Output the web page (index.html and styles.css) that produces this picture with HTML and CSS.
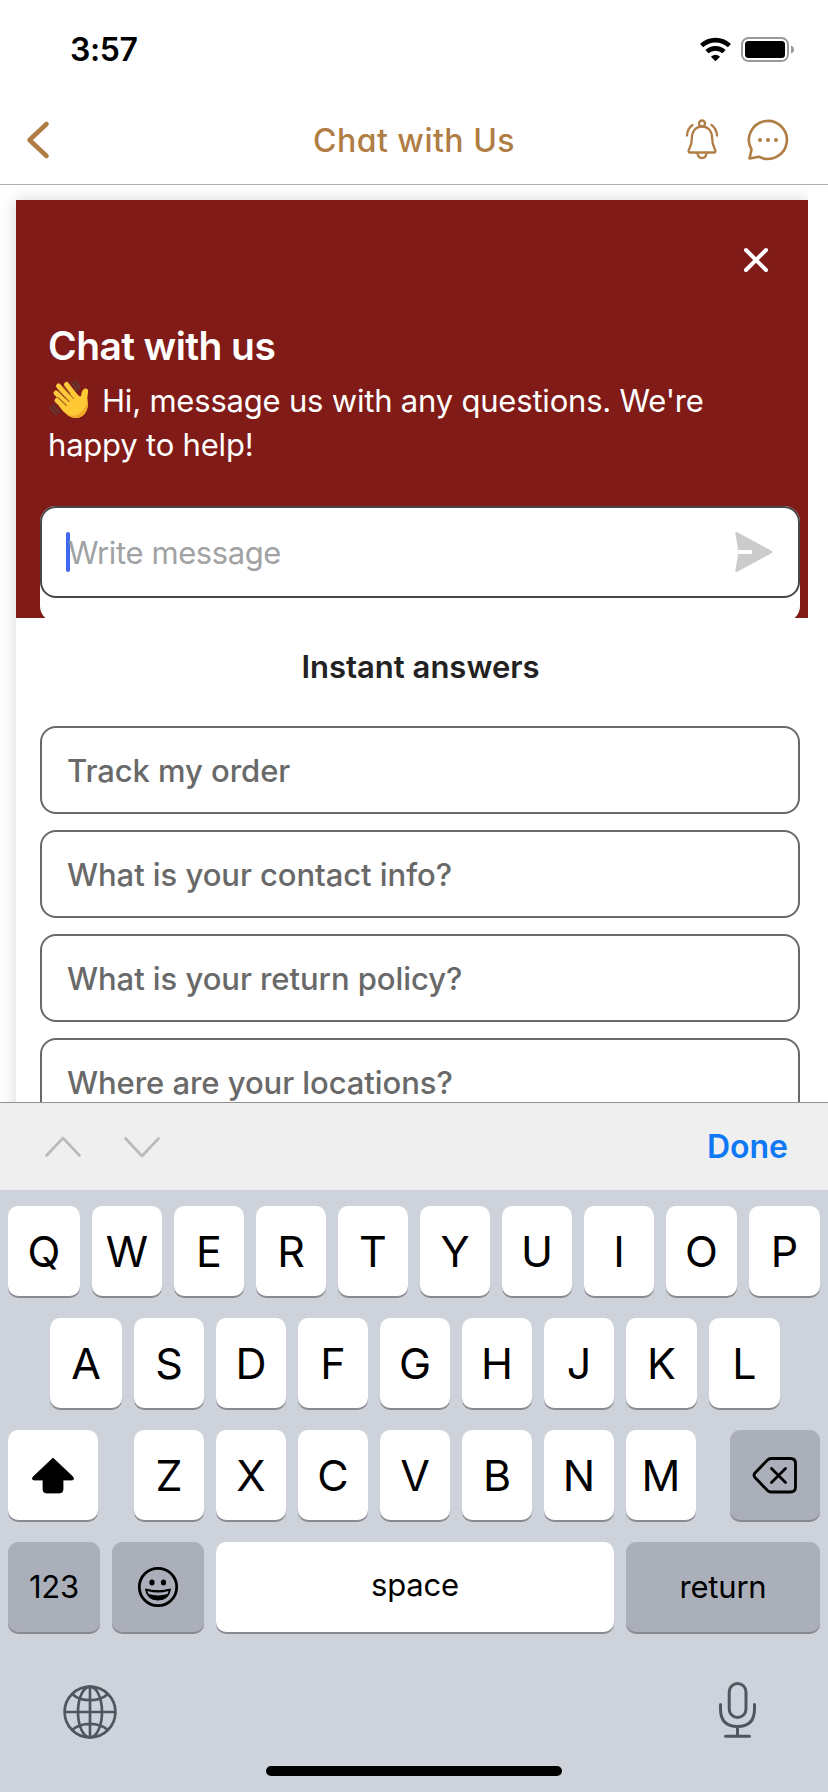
FILE: index.html
```html
<!DOCTYPE html>
<html lang="en">
<head>
<meta charset="utf-8">
<title>Chat with Us</title>
<link rel="stylesheet" href="styles.css">
</head>
<body>
<div class="screen">
  <div class="status">
    <span class="time">3:57</span>
    <svg class="status-icons" width="96" height="28" viewBox="698 36 96 28">
      <g fill="none" stroke="#000" stroke-width="4.6">
        <path d="M701.600 45.600A20.500 20.500 0 0 1 729.400 45.600"/>
        <path d="M707 51.700A12.400 12.400 0 0 1 724 51.700"/>
      </g>
      <path d="M715.500 61.200L710.900 56.700Q715.500 52.600 720.100 56.700Z"/>
      <rect x="742" y="38" width="46" height="23" rx="6.500" fill="none" stroke="#999" stroke-width="2"/>
      <rect x="745" y="41" width="40" height="17" rx="3.500"/>
      <path d="M791 45.500Q794 46.500 794 49.500Q794 52.500 791 53.500Z" fill="#999"/>
    </svg>
  </div>

  <header class="nav">
    <svg class="back" width="28" height="44" viewBox="0 0 28 44"><path d="M22.500 6L5.500 22L22.500 38" /></svg>
    <h1 class="nav-title">Chat with Us</h1>
    <div class="nav-actions">
      <svg width="36" height="44" viewBox="684 119 36 44">
        <g fill="none" stroke="#b07d45" stroke-width="2.300" stroke-linecap="round" stroke-linejoin="round">
          <circle cx="702" cy="124.500" r="3"/>
          <path d="M702 127.500C695.500 127.500 691.800 132.500 691.800 139.500C691.800 147 689.500 148 688.600 151.800Q688.400 153.500 690 153.500H714Q715.600 153.500 715.400 151.800C714.500 148 712.200 147 712.200 139.500C712.200 132.500 708.500 127.500 702 127.500Z"/>
          <path d="M697.500 154.300Q698 159 702 159Q706 159 706.500 154.300"/>
          <path d="M692.500 126Q687.500 129.500 687 136.500M711.500 126Q716.500 129.500 717 136.500"/>
        </g>
      </svg>
      <svg width="44" height="44" viewBox="746 118 44 44">
        <path d="M749.500 158.500L751.500 149.500A19 19 0 1 1 759 156.700Z" fill="none" stroke="#b07d45" stroke-width="2.600" stroke-linejoin="round"/>
        <g fill="#b07d45"><circle cx="760" cy="140" r="2"/><circle cx="768" cy="140" r="2"/><circle cx="776" cy="140" r="2"/></g>
      </svg>
    </div>
  </header>

  <main class="frame">
    <section class="card">
      <div class="hero">
        <div class="hero-top">
          <svg width="28" height="28" viewBox="0 0 28 28"><path d="M4 4L24 24M24 4L4 24" stroke="#fff" stroke-width="4" stroke-linecap="round"/></svg>
        </div>
        <h2 class="hero-title">Chat with us</h2>
        <p class="hero-text"><svg class="wave" width="42" height="42" viewBox="49 380 42 42" role="img" aria-label="waving hand">
          <g fill="none" stroke="#5d3a34" stroke-width="2" stroke-linecap="round">
            <path d="M73 384Q76.500 387 78 391.500M76 382Q79.500 385 80.500 389"/>
            <path d="M54 405.500Q56 410 60.500 413M51.500 408Q53.500 413 57.500 415"/>
          </g>
          <g fill="none" stroke="#ffca3d" stroke-width="5" stroke-linecap="round">
            <path d="M67.500 385.500L78 399M59.500 387L72 401M57 394L68 405M58 401.500L68 411"/>
          </g>
          <path d="M64 403L74 392L80 397Q82.500 398.500 82.500 394Q84 389 87 389.500Q90 390 88.800 394.500Q88 398 88.800 404Q89.300 413 82.500 417.500Q75.500 421 69 416.500Q63 412 60 407Z" fill="#ffc936"/>
          <path d="M64 387.800L74.500 399.500M59.800 392L70 402.500M58.800 398.500L67.500 406.500" stroke="#a9661c" stroke-width="1.100" stroke-linecap="round"/>
          <path d="M68 415.600Q76 418.500 82 413.500Q87 409 88.500 402Q90 412.500 83 417.300Q75.500 421 68 415.600Z" fill="#f3a827"/>
        </svg><span class="line1">Hi, message us with any questions. We're</span><br><span class="line2">happy to help!</span></p>
        <div class="composer">
          <div class="field">
            <span class="caret"></span>
            <span class="placeholder">Write message</span>
            <svg class="send" width="40" height="44" viewBox="734 530 40 44">
              <path d="M736.300 533L771.500 552L736.300 571L739.500 552Z" fill="#cbcbcb" stroke="#cbcbcb" stroke-width="2" stroke-linejoin="round"/>
              <path d="M738.500 552H752" stroke="#fff" stroke-width="4"/>
            </svg>
          </div>
        </div>
      </div>
      <h3 class="faq-title">Instant answers</h3>
      <ul class="faq">
        <li class="q">Track my order</li>
        <li class="q">What is your contact info?</li>
        <li class="q">What is your return policy?</li>
        <li class="q">Where are your locations?</li>
      </ul>
    </section>
  </main>

  <div class="accessory">
    <svg width="116" height="24" viewBox="44 1134 116 24"><path d="M46.500 1154.500L63 1137L79.500 1154.500M125.500 1137.500L142 1155L158.500 1137.500" fill="none" stroke="#bababa" stroke-width="2.600" stroke-linecap="round" stroke-linejoin="round"/></svg>
    <span class="done">Done</span>
  </div>

  <div class="keyboard">
    <div class="row row1">
      <span class="key">Q</span><span class="key">W</span><span class="key">E</span><span class="key">R</span><span class="key">T</span><span class="key">Y</span><span class="key">U</span><span class="key">I</span><span class="key">O</span><span class="key">P</span>
    </div>
    <div class="row row2">
      <span class="key">A</span><span class="key">S</span><span class="key">D</span><span class="key">F</span><span class="key">G</span><span class="key">H</span><span class="key">J</span><span class="key">K</span><span class="key">L</span>
    </div>
    <div class="row row3">
      <span class="key"><svg width="44" height="38" viewBox="0 0 44 38"><path d="M22 2L42 21Q43.500 24 41 24H32V33.500Q32 37 28.500 37H15.500Q12 37 12 33.500V24H3Q.500 24 2 21Z" stroke="#000" stroke-width=".8" stroke-linejoin="round"/></svg></span>
      <div class="letters"><span class="key">Z</span><span class="key">X</span><span class="key">C</span><span class="key">V</span><span class="key">B</span><span class="key">N</span><span class="key">M</span></div>
      <span class="key dark"><svg width="46" height="38" viewBox="0 0 46 38"><path d="M19 2.500H38.500Q43.500 2.500 43.500 7.500V31Q43.500 36 38.500 36H19Q17 36 15.500 34.500L3 21.500Q1 19.200 3 17L15.500 4Q17 2.500 19 2.500ZM19.500 12.500L33.500 26.500M33.500 12.500L19.500 26.500" fill="none" stroke="#000" stroke-width="2.800" stroke-linecap="round" stroke-linejoin="round"/></svg></span>
    </div>
    <div class="row row4">
      <span class="key dark small">123</span>
      <span class="key dark"><svg width="42" height="42" viewBox="0 0 42 42"><circle cx="21" cy="21" r="18.700" fill="none" stroke="#000" stroke-width="2.800"/><ellipse cx="15" cy="16.500" rx="2.600" ry="3"/><ellipse cx="26.500" cy="16.500" rx="2.600" ry="3"/><path d="M8.500 23Q21 26.500 33.500 23Q32 34 21 34Q10 34 8.500 23Z" stroke="#000" stroke-width="1" stroke-linejoin="round"/><path d="M10.500 25Q21 28 31.500 25L30.600 28Q21 30.800 11.400 28Z" fill="#abafba"/></svg></span>
      <span class="key small space">space</span>
      <span class="key dark small return">return</span>
    </div>
    <div class="system">
      <svg class="globe" width="56" height="56" viewBox="-28 -28 56 56"><g fill="none" stroke="#50555e" stroke-width="2.700"><circle r="25.400"/><path d="M0-25.400V25.400M-25.400 0H25.400M-18-18Q-11-11.800 0-11.800Q11-11.800 18-18M-18 18Q-11 11.800 0 11.800Q11 11.800 18 18"/><ellipse rx="12" ry="25.400"/></g></svg>
      <svg width="42" height="60" viewBox="716 1680 42 60"><g fill="none" stroke="#50555e" stroke-width="3" stroke-linecap="round"><rect x="729.200" y="1683.500" width="16.800" height="34" rx="8.400"/><path d="M720.500 1704.500V1709Q720.500 1726.500 737.500 1726.500Q754.500 1726.500 754.500 1709V1704.500M737.500 1726.500V1736M725.500 1736.300H749.500"/></g></svg>
    </div>
    <div class="home"></div>
  </div>
</div>
</body>
</html>
```
FILE: styles.css
```css
* { box-sizing: border-box; }
body { margin: 0; background: #fff; font-family: Inter, "Liberation Sans", sans-serif; }
h1, h2, h3, p, ul { margin: 0; padding: 0; }
svg { display: block; flex: none; }
.screen { width: 828px; height: 1792px; display: flex; flex-direction: column; overflow: hidden; }

.status { height: 98px; flex: none; display: flex; justify-content: space-between; align-items: center; padding: 2px 34px 0 70px; }
.time { font-size: 32px; font-weight: 600; line-height: 40px; letter-spacing: -0.4px; }

.nav { height: 87px; flex: none; display: grid; grid-template-columns: 1fr auto 1fr; align-items: center; padding: 0 38px 2px 24px; border-bottom: 1px solid #b0b0b0; color: #b07d45; }
.back { fill: none; stroke: #b07d45; stroke-width: 4.6; stroke-linecap: round; stroke-linejoin: round; }
.nav-title { font-size: 32px; font-weight: 500; line-height: 40px; letter-spacing: 0.5px; font-feature-settings: "cv11"; padding: 2px 0 0 14px; white-space: nowrap; }
.nav-actions { display: flex; justify-content: flex-end; gap: 26px; }

.frame { width: 808px; height: 917px; flex: none; overflow: hidden; padding: 15px 0 0 16px; }
.card { height: 1000px; background: #fff; box-shadow: 0 0 16px rgba(0, 0, 0, .16); }
.hero { height: 418px; background: #801b17; color: #fff; overflow: hidden; padding: 46px 8px 0 24px; }
.hero-top { display: flex; justify-content: flex-end; padding-right: 30px; }
.hero-title { margin: 48px 0 0 8px; font-size: 39px; font-weight: 600; line-height: 48px; letter-spacing: -0.6px; white-space: nowrap; }
.hero-text { margin: 9px 0 0 8px; font-size: 31px; line-height: 44px; letter-spacing: -0.2px; white-space: nowrap; }
.wave { display: inline-block; vertical-align: top; margin-right: 12px; }
.composer { height: 116px; margin-top: 39px; border-radius: 16px; background: #fff; }
.field { height: 92px; display: flex; align-items: center; border: 2px solid #484848; border-radius: 16px; padding: 0 24px; background: #fff; }
.caret { width: 4px; height: 40px; border-radius: 2px; background: #4168f0; }
.placeholder { font-size: 31px; line-height: 40px; letter-spacing: -0.4px; color: #a0a2a4; flex: 1; padding-top: 1px; margin-left: -2px; }
.faq-title { margin: 29px 0 39px 17px; text-align: center; font-size: 31px; font-weight: 600; line-height: 40px; color: #222; }
.faq { list-style: none; margin: 0 8px 0 24px; display: flex; flex-direction: column; gap: 16px; }
.q { height: 88px; border: 2px solid #696969; border-radius: 16px; padding: 1px 25px 0; display: flex; align-items: center; font-size: 31px; font-weight: 500; letter-spacing: -0.06px; color: #696969; }

.accessory { height: 88px; flex: none; border-top: 1px solid #929292; background: #efefef; display: flex; justify-content: space-between; align-items: center; padding: 0 40px 0 44px; }
.done { font-size: 32px; font-weight: 600; color: #0f78f5; }

.keyboard { flex: 1; background: #ced3db; padding: 16px 8px 0; }
.row { height: 90px; margin-bottom: 22px; display: grid; gap: 12px; }
.row1 { grid-template-columns: 72px repeat(7, 70px) 71px 71px; }
.row2 { grid-template-columns: 72px repeat(6, 70px) 71px 71px; padding-left: 42px; }
.row3 { grid-template-columns: 90px 562px 90px; column-gap: 0; justify-content: space-between; }
.letters { display: grid; grid-template-columns: repeat(7, 70px); gap: 12px; margin-left: 1px; }
.row4 { grid-template-columns: 92px 92px 398px 194px; }
.key { display: flex; align-items: center; justify-content: center; border-radius: 10px; background: #fff; box-shadow: 0 2px 0 #898b90; font-size: 43px; font-weight: 400; line-height: 48px; color: #000; }
.dark { background: #abafba; }
.small { font-size: 31px; letter-spacing: -0.2px; }
.space { padding-bottom: 4px; }
.system { display: flex; justify-content: space-between; align-items: center; padding: 26px 62px 0 54px; }
.globe { margin-top: 4px; }
.home { width: 296px; height: 10px; border-radius: 5px; background: #000; margin: 26px auto 0; }
```
